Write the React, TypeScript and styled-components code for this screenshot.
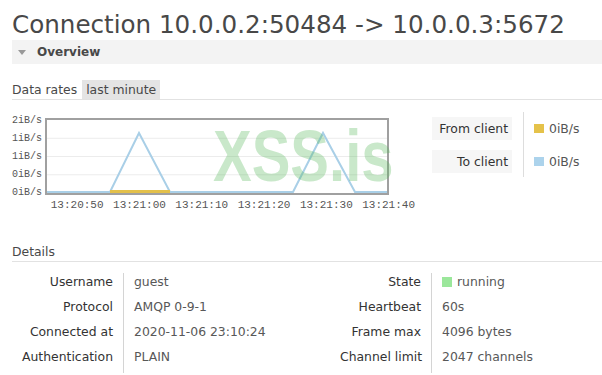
import { Fragment } from "react";
import styled, { createGlobalStyle } from "styled-components";

const GlobalStyle = createGlobalStyle`
  body {
    margin: 0;
    background: #fff;
    font-family: "DejaVu Sans", Verdana, sans-serif;
    font-size: 12.4px;
    color: #444;
  }
`;

const Page = styled.div`
  padding: 10px 0 0 12px;
  width: 590px;
  height: 365px;
  overflow: hidden;
`;

const Title = styled.h1`
  margin: 0;
  font-size: 24.6px;
  line-height: 30px;
  font-weight: normal;
  color: #484848;
  white-space: nowrap;
`;

const SectionBar = styled.div`
  display: flex;
  align-items: center;
  height: 24px;
  background: #f3f3f3;
  font-size: 12px;
  font-weight: bold;
  color: #484848;
`;

const Arrow = styled.span`
  width: 0;
  height: 0;
  margin: 0 11px 0 6px;
  border-left: 4.5px solid transparent;
  border-right: 4.5px solid transparent;
  border-top: 5px solid #999;
`;

const SubHeading = styled.div<{ top: number }>`
  display: flex;
  align-items: stretch;
  height: 19px;
  line-height: 19px;
  margin-top: ${p => p.top}px;
  border-bottom: 1px solid #e2e2e2;
  color: #484848;
`;

const Highlight = styled.span`
  margin-left: 5px;
  padding: 0 4px;
  background: #e4e4e4;
`;

const ChartRow = styled.div`
  display: flex;
  align-items: flex-start;
  height: 115px;
`;

const Chart = styled.div`
  position: relative;
  display: grid;
  grid-template-columns: 33px 344px;
  margin-top: 18px;
  font-family: "Liberation Mono", "DejaVu Sans Mono", monospace;
  color: #555;
`;

const YAxis = styled.div`
  display: flex;
  flex-direction: column;
  justify-content: space-between;
  margin: -2px 0 -3px;
  padding-right: 3px;
  text-align: right;
  font-size: 10px;
  line-height: 10px;
`;

const Plot = styled.div`
  height: 73px;
  border: 2px solid #a0a0a0;
  background: #fff;
  svg {
    display: block;
  }
`;

const XAxis = styled.div`
  grid-column: 2;
  display: flex;
  margin-left: 1px;
  width: 380px;
  font-size: 11px;
  line-height: 20px;
`;

const XTick = styled.span`
  flex: 0 0 62.3px;
  text-align: center;
`;

const Watermark = styled.div`
  position: absolute;
  left: 201px;
  top: 2px;
  font-family: "Liberation Sans", Arial, sans-serif;
  font-weight: bold;
  font-size: 58px;
  line-height: 58px;
  color: rgba(90, 185, 95, 0.33);
  transform: scaleY(1.25);
  transform-origin: top left;
  pointer-events: none;
  white-space: nowrap;
`;

const Legend = styled.div`
  display: flex;
  margin: 12px 0 0 43px;
`;

const LegendLabels = styled.div`
  display: flex;
  flex-direction: column;
  gap: 10px;
  height: 60px;
  padding: 5px 11px 0 0;
  border-right: 1px solid #ddd;
`;

const LegendBox = styled.div`
  width: 76px;
  height: 23px;
  line-height: 23px;
  padding-right: 4px;
  text-align: right;
  background: #f6f6f6;
  color: #333;
`;

const LegendValues = styled.div`
  display: flex;
  flex-direction: column;
  gap: 10px;
  padding: 5px 0 0 10px;
`;

const LegendValue = styled.div`
  display: flex;
  align-items: center;
  height: 23px;
  color: #555;
`;

const Swatch = styled.span<{ color: string }>`
  width: 10px;
  height: 9px;
  margin-right: 5px;
  background: ${p => p.color};
`;

const DetailsRow = styled.div`
  display: flex;
  margin-top: 11px;
`;

const Table = styled.div<{ labelWidth: number; width?: number }>`
  display: grid;
  grid-template-columns: ${p => p.labelWidth}px auto;
  align-content: start;
  ${p => (p.width ? `width: ${p.width}px;` : "")}
`;

const Label = styled.div`
  padding: 0 10px 8px 0;
  line-height: 17px;
  text-align: right;
  color: #333;
  white-space: nowrap;
`;

const Value = styled.div`
  display: flex;
  align-items: center;
  height: 17px;
  padding: 0 0 8px 10px;
  border-left: 1px solid #d4d4d4;
  color: #585858;
  white-space: nowrap;
`;

const StateDot = styled.span`
  width: 10px;
  height: 10px;
  margin-right: 5px;
  background: #9be79b;
`;

const yTicks = ["2iB/s", "1iB/s", "1iB/s", "0iB/s", "0iB/s"];
const xTicks = ["13:20:50", "13:21:00", "13:21:10", "13:21:20", "13:21:30", "13:21:40"];

const leftRows: [string, string][] = [
  ["Username", "guest"],
  ["Protocol", "AMQP 0-9-1"],
  ["Connected at", "2020-11-06 23:10:24"],
  ["Authentication", "PLAIN"],
];

const rightRows: [string, string][] = [
  ["State", "running"],
  ["Heartbeat", "60s"],
  ["Frame max", "4096 bytes"],
  ["Channel limit", "2047 channels"],
];

function RatesChart() {
  return (
    <svg width="340" height="73" viewBox="0 0 340 73">
      {[18.25, 36.5, 54.75].map(y => (
        <line key={y} x1="0" x2="340" y1={y} y2={y} stroke="#ececec" strokeWidth="1" />
      ))}
      <polyline
        points="0,72 63,72 92,13 123,72 246,72 276,13 308,72 340,72"
        fill="none"
        stroke="#a9cfe7"
        strokeWidth="2"
      />
      <line x1="63" x2="123" y1="71.5" y2="71.5" stroke="#e3c04a" strokeWidth="3" />
    </svg>
  );
}

export default function App() {
  return (
    <>
      <GlobalStyle />
      <Page>
        <Title>Connection 10.0.0.2:50484 -&gt; 10.0.0.3:5672</Title>
        <SectionBar>
          <Arrow />
          Overview
        </SectionBar>

        <SubHeading top={16}>
          Data rates<Highlight>last minute</Highlight>
        </SubHeading>
        <ChartRow>
          <Chart>
            <YAxis>
              {yTicks.map((t, i) => (
                <span key={i}>{t}</span>
              ))}
            </YAxis>
            <Plot>
              <RatesChart />
            </Plot>
            <XAxis>
              {xTicks.map(t => (
                <XTick key={t}>{t}</XTick>
              ))}
            </XAxis>
            <Watermark>XSS.is</Watermark>
          </Chart>
          <Legend>
            <LegendLabels>
              <LegendBox>From client</LegendBox>
              <LegendBox>To client</LegendBox>
            </LegendLabels>
            <LegendValues>
              <LegendValue>
                <Swatch color="#e5c24a" />
                0iB/s
              </LegendValue>
              <LegendValue>
                <Swatch color="#acd3ec" />
                0iB/s
              </LegendValue>
            </LegendValues>
          </Legend>
        </ChartRow>

        <SubHeading top={27}>Details</SubHeading>
        <DetailsRow>
          <Table labelWidth={111} width={328}>
            {leftRows.map(([k, v]) => (
              <Fragment key={k}>
                <Label>{k}</Label>
                <Value>{v}</Value>
              </Fragment>
            ))}
          </Table>
          <Table labelWidth={91}>
            {rightRows.map(([k, v]) => (
              <Fragment key={k}>
                <Label>{k}</Label>
                <Value>
                  {k === "State" && <StateDot />}
                  {v}
                </Value>
              </Fragment>
            ))}
          </Table>
        </DetailsRow>
      </Page>
    </>
  );
}
